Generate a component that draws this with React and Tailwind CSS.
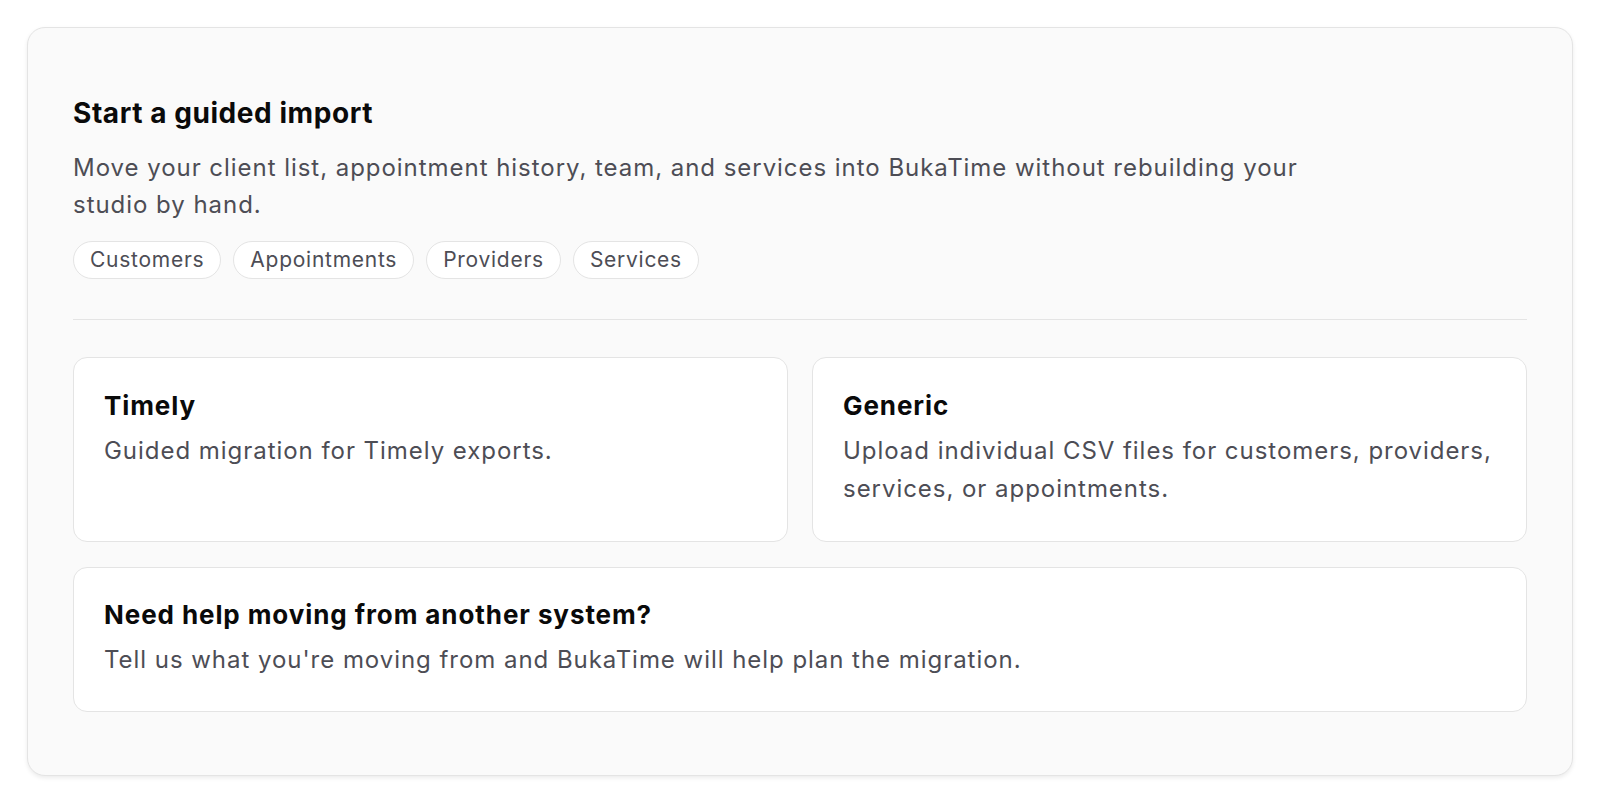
export default function App() {
  const chips = ["Customers", "Appointments", "Providers", "Services"];
  return (
    <div className="w-[1600px] h-[802px] bg-white p-[27px]" style={{ fontFamily: "Inter, 'Noto Sans', sans-serif" }}>
      <div className="rounded-[18px] border border-[#e4e4e4] bg-[#fafafa] shadow-[0_2px_4px_rgba(0,0,0,0.08)] px-[45px] pt-[65px] pb-[63px]">
        <h1 className="text-[28px] leading-[40px] font-bold tracking-[0.02em] text-[#0a0a0a]">Start a guided import</h1>
        <p className="mt-[16px] max-w-[1230px] text-[24px] leading-[37px] tracking-[0.04em] text-[#4d4d55]">
          Move your client list, appointment history, team, and services into BukaTime without rebuilding your studio by hand.
        </p>
        <div className="mt-[18px] flex gap-[12px]">
          {chips.map((c) => (
            <span key={c} className="h-[38px] flex items-center rounded-full border border-[#e4e4e4] bg-white px-[16px] text-[21px] tracking-[0.035em] text-[#4d4d55]">
              {c}
            </span>
          ))}
        </div>
        <div className="mt-[40px] h-px bg-[#e4e4e4]" />
        <div className="mt-[37px] grid grid-cols-2 gap-[24px]">
          <div className="h-[185px] rounded-[14px] border border-[#e4e4e4] bg-white px-[30px] pt-[30px]">
            <h2 className="text-[26px] leading-[36px] font-bold tracking-[0.035em] text-[#0a0a0a]">Timely</h2>
            <p className="mt-[8px] text-[24px] leading-[38px] tracking-[0.04em] text-[#4d4d55]">Guided migration for Timely exports.</p>
          </div>
          <div className="h-[185px] rounded-[14px] border border-[#e4e4e4] bg-white px-[30px] pt-[30px]">
            <h2 className="text-[26px] leading-[36px] font-bold tracking-[0.035em] text-[#0a0a0a]">Generic</h2>
            <p className="mt-[8px] text-[24px] leading-[38px] tracking-[0.04em] text-[#4d4d55]">Upload individual CSV files for customers, providers, services, or appointments.</p>
          </div>
        </div>
        <div className="mt-[25px] h-[145px] rounded-[14px] border border-[#e4e4e4] bg-white px-[30px] pt-[29px]">
          <h2 className="text-[26px] leading-[36px] font-bold tracking-[0.035em] text-[#0a0a0a]">Need help moving from another system?</h2>
          <p className="mt-[8px] text-[24px] leading-[38px] tracking-[0.04em] text-[#4d4d55]">Tell us what you're moving from and BukaTime will help plan the migration.</p>
        </div>
      </div>
    </div>
  );
}
